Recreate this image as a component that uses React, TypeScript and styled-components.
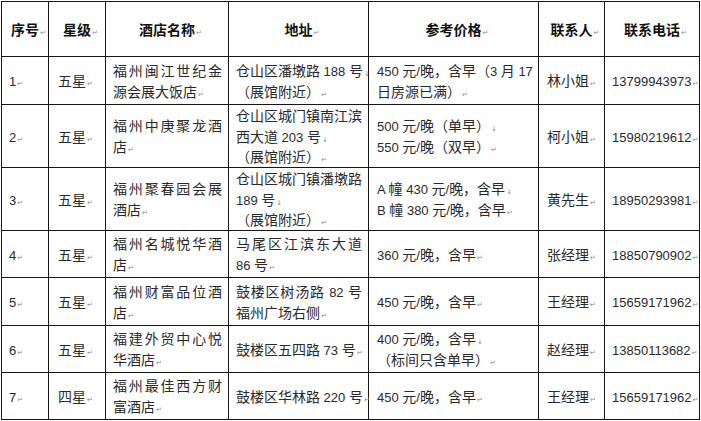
import React from "react";
import styled, { createGlobalStyle } from "styled-components";

const Global = createGlobalStyle`
  html, body { margin: 0; padding: 0; background: #ffffff; }
  body { font-family: "Noto Sans CJK SC", "Liberation Sans", sans-serif; }
`;

const Page = styled.div`
  padding: 1px 0 0 1px;
`;

const Grid = styled.div`
  display: grid;
  grid-template-columns: 47px 57px 123px 140px 170px 66px 95px;
  grid-template-rows: 55px 48px 63px 63px 47px 48px 47px 47px;
  width: max-content;
  border-left: 1px solid #151515;
  border-top: 1px solid #151515;
`;

const Cell = styled.div<{ $head?: boolean; $pl?: number; $center?: boolean }>`
  box-sizing: border-box;
  border-right: 1px solid #151515;
  border-bottom: 1px solid #151515;
  display: flex;
  flex-direction: column;
  justify-content: center;
  align-items: ${(p) => (p.$center ? "center" : "stretch")};
  padding: 0 6px 0 ${(p) => p.$pl ?? 7}px;
  font-size: 14px;
  line-height: 20.7px;
  color: ${(p) => (p.$head ? "#111" : "#2a2a2a")};
  font-weight: ${(p) => (p.$head ? 700 : 400)};
  font-family: "Noto Sans CJK SC", "Liberation Sans", sans-serif;
  overflow: visible;
`;

const Line = styled.div<{ $justify?: boolean }>`
  height: 20.7px;
  white-space: nowrap;
  text-align: ${(p) => (p.$justify ? "justify" : "left")};
  text-align-last: ${(p) => (p.$justify ? "justify" : "auto")};
  text-justify: inter-character;
`;

const Latin = styled.span`
  font-family: "Liberation Sans", Arial, sans-serif;
  font-size: 13px;
  line-height: 13px;
`;

const Mark = styled.span`
  display: inline-block;
  width: 0;
  line-height: 8px;
  overflow: visible;
  white-space: nowrap;
  font-family: "DejaVu Sans", sans-serif;
  font-size: 7px;
  font-weight: 400;
  color: #8a8a8a;
  vertical-align: baseline;
  padding-left: 1px;
`;

function runs(s: string) {
  const parts = s.match(/[\x20-\x7e]+|[^\x20-\x7e]+/g) || [];
  return parts.map((p, i) =>
    /^[\x20-\x7e]+$/.test(p) ? <Latin key={i}>{p}</Latin> : <React.Fragment key={i}>{p}</React.Fragment>
  );
}

type L = { t: string; j?: boolean; m?: "p" | "b" };

function Lines({ lines }: { lines: L[] }) {
  return (
    <>
      {lines.map((l, i) => (
        <Line key={i} $justify={l.j}>
          {runs(l.t)}
          {l.m === "p" && <Mark>↵</Mark>}
          {l.m === "b" && <Mark>↓</Mark>}
        </Line>
      ))}
    </>
  );
}

const headers = ["序号", "星级", "酒店名称", "地址", "参考价格", "联系人", "联系电话"];

type Row = {
  no: string;
  star: string;
  name: L[];
  addr: L[];
  price: L[];
  contact: string;
  phone: string;
};

const rows: Row[] = [
  {
    no: "1",
    star: "五星",
    name: [{ t: "福州闽江世纪金", j: true }, { t: "源会展大饭店", m: "p" }],
    addr: [{ t: "仓山区潘墩路 188 号", m: "b" }, { t: "（展馆附近）", m: "p" }],
    price: [{ t: "450 元/晚，含早（3 月 17", j: true }, { t: "日房源已满）", m: "p" }],
    contact: "林小姐",
    phone: "13799943973",
  },
  {
    no: "2",
    star: "五星",
    name: [{ t: "福州中庚聚龙酒", j: true }, { t: "店", m: "p" }],
    addr: [{ t: "仓山区城门镇南江滨" }, { t: "西大道 203 号", m: "b" }, { t: "（展馆附近）", m: "p" }],
    price: [{ t: "500 元/晚（单早）", m: "b" }, { t: "550 元/晚（双早）", m: "p" }],
    contact: "柯小姐",
    phone: "15980219612",
  },
  {
    no: "3",
    star: "五星",
    name: [{ t: "福州聚春园会展", j: true }, { t: "酒店", m: "p" }],
    addr: [{ t: "仓山区城门镇潘墩路" }, { t: "189 号", m: "b" }, { t: "（展馆附近）", m: "p" }],
    price: [{ t: "A 幢 430 元/晚，含早", m: "b" }, { t: "B 幢 380 元/晚，含早", m: "p" }],
    contact: "黄先生",
    phone: "18950293981",
  },
  {
    no: "4",
    star: "五星",
    name: [{ t: "福州名城悦华酒", j: true }, { t: "店", m: "p" }],
    addr: [{ t: "马尾区江滨东大道", j: true }, { t: "86 号", m: "p" }],
    price: [{ t: "360 元/晚，含早", m: "p" }],
    contact: "张经理",
    phone: "18850790902",
  },
  {
    no: "5",
    star: "五星",
    name: [{ t: "福州财富品位酒", j: true }, { t: "店", m: "p" }],
    addr: [{ t: "鼓楼区树汤路 82 号", j: true }, { t: "福州广场右侧", m: "p" }],
    price: [{ t: "450 元/晚，含早", m: "p" }],
    contact: "王经理",
    phone: "15659171962",
  },
  {
    no: "6",
    star: "五星",
    name: [{ t: "福建外贸中心悦", j: true }, { t: "华酒店", m: "p" }],
    addr: [{ t: "鼓楼区五四路 73 号", m: "p" }],
    price: [{ t: "400 元/晚，含早", m: "b" }, { t: "（标间只含单早）", m: "p" }],
    contact: "赵经理",
    phone: "13850113682",
  },
  {
    no: "7",
    star: "四星",
    name: [{ t: "福州最佳西方财", j: true }, { t: "富酒店", m: "p" }],
    addr: [{ t: "鼓楼区华林路 220 号", m: "p" }],
    price: [{ t: "450 元/晚，含早", m: "p" }],
    contact: "王经理",
    phone: "15659171962",
  },
];

export default function App() {
  return (
    <Page>
      <Global />
      <Grid>
        {headers.map((h) => (
          <Cell key={h} $head $center>
            <Lines lines={[{ t: h, m: "p" }]} />
          </Cell>
        ))}
        {rows.map((r) => (
          <React.Fragment key={r.no}>
            <Cell $pl={7}>
              <Lines lines={[{ t: r.no, m: "p" }]} />
            </Cell>
            <Cell $pl={9}>
              <Lines lines={[{ t: r.star, m: "p" }]} />
            </Cell>
            <Cell $pl={7}>
              <Lines lines={r.name} />
            </Cell>
            <Cell $pl={7}>
              <Lines lines={r.addr} />
            </Cell>
            <Cell $pl={8}>
              <Lines lines={r.price} />
            </Cell>
            <Cell $pl={8}>
              <Lines lines={[{ t: r.contact, m: "p" }]} />
            </Cell>
            <Cell $pl={7}>
              <Lines lines={[{ t: r.phone, m: "p" }]} />
            </Cell>
          </React.Fragment>
        ))}
      </Grid>
    </Page>
  );
}
